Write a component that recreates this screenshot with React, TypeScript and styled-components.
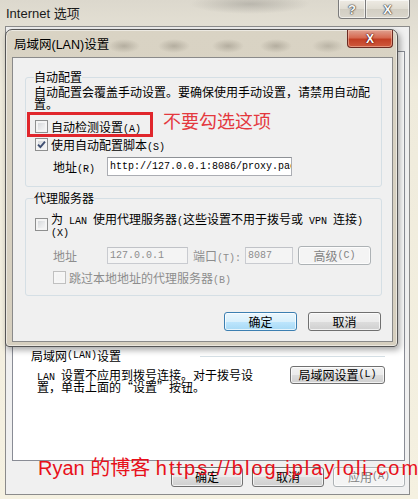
import React from 'react'
import styled, { createGlobalStyle } from 'styled-components'

const GlobalStyle = createGlobalStyle`
  html, body { margin: 0; padding: 0; }
  body { background: #f4f0e0; }
  * { box-sizing: border-box; }
`

const cjk = `"Noto Sans CJK SC", "Liberation Sans", sans-serif`
const ui = `"Liberation Sans", "Noto Sans CJK SC", sans-serif`

const Desktop = styled.div`
  position: relative;
  width: 418px;
  height: 499px;
  overflow: hidden;
  display: flex;
  flex-direction: column;
  font-family: ${cjk};
  font-size: 12px;
  color: #000;
  background:
    radial-gradient(ellipse 60px 10px at 250px 4px, rgba(120, 118, 112, 0.35), transparent),
    linear-gradient(180deg, #dcd8cd 0, #e3dfd3 26px, #efebdc 90px, #f5f1e1 100%);
`

const OuterTitleBar = styled.div`
  height: 26px;
  flex: none;
  display: flex;
  justify-content: space-between;
  align-items: flex-start;
  padding: 0 8px 0 6px;
`
const WindowTitle = styled.div`
  margin-top: 7px;
  font-family: ${ui};
  font-size: 13px;
  line-height: 14px;
  color: #1a1a1a;
`
const CaptionGroup = styled.div`
  display: flex;
`
const CaptionButton = styled.div<{ $w: number; $side: 'left' | 'right' }>`
  width: ${p => p.$w}px;
  height: 19px;
  display: flex;
  align-items: center;
  justify-content: center;
  border: 1px solid #7b7b7b;
  border-top: none;
  border-left-width: ${p => (p.$side === 'right' ? 0 : 1)}px;
  border-radius: ${p => (p.$side === 'left' ? '0 0 0 4px' : '0 0 4px 0')};
  background: linear-gradient(180deg, #eeebe4 0%, #e0dcd2 50%, #d2cec3 51%, #dad6cc 100%);
  box-shadow: inset 0 0 0 1px rgba(255, 255, 255, 0.6);
  font: bold 13px "Liberation Sans", sans-serif;
  color: #fafafa;
  text-shadow: 0 0 1px #333, 0 0 1px #333, 0 0 2px #555;
`

const OuterBody = styled.div`
  flex: 1;
  margin: 0 8px 4px 5px;
  border: 1px solid #8b8b8b;
  background: #f0f0f0;
  display: flex;
  flex-direction: column;
  gap: 6px;
  padding: 24px 4px 7px 6px;
`
const TabPanel = styled.div`
  flex: 1;
  background: #fff;
  border: 1px solid #898c95;
  display: flex;
  flex-direction: column;
  justify-content: flex-end;
  padding: 0 19px 67px 18px;
`
const LanHeader = styled.div`
  display: flex;
  align-items: center;
  height: 12px;
  line-height: 12px;
`
const LanLine = styled.div`
  margin-left: auto;
  width: 185px;
  border-top: 1px solid #d5dfe5;
`
const LanBody = styled.div`
  margin-top: 4px;
  height: 27px;
  display: flex;
  justify-content: space-between;
  align-items: flex-start;
`
const LanText = styled.div`
  padding: 3px 0 0 6px;
  line-height: 12px;
`
const ButtonRow = styled.div<{ $gap: number }>`
  display: flex;
  justify-content: flex-end;
  gap: ${p => p.$gap}px;
`

const Button = styled.div<{ $w: number; $h: number; $kind?: 'default' | 'disabled' }>`
  width: ${p => p.$w}px;
  height: ${p => p.$h}px;
  flex: none;
  display: flex;
  align-items: center;
  justify-content: center;
  border-radius: 3px;
  line-height: 12px;
  border: 1px solid
    ${p => (p.$kind === 'default' ? '#3c7fb1' : p.$kind === 'disabled' ? '#adb2b5' : '#707070')};
  color: ${p => (p.$kind === 'disabled' ? '#838383' : '#000')};
  background: ${p =>
    p.$kind === 'default'
      ? 'linear-gradient(180deg, #eaf6fd 0%, #d9f0fc 50%, #bee6fd 51%, #a7d9f5 100%)'
      : p.$kind === 'disabled'
        ? '#f4f4f4'
        : 'linear-gradient(180deg, #f2f2f2 0%, #ebebeb 50%, #dddddd 51%, #cfcfcf 100%)'};
  box-shadow: inset 0 0 0 1px rgba(255, 255, 255, 0.7);
`

/* LAN dialog */
const Dialog = styled.div`
  position: absolute;
  left: 5px;
  top: 29px;
  width: 393px;
  height: 318px;
  display: flex;
  flex-direction: column;
  border: 1px solid #555;
  border-radius: 7px 7px 4px 4px;
  background:
    radial-gradient(ellipse 16px 7px at 118px 16px, rgba(95, 88, 75, 0.3), transparent),
    radial-gradient(ellipse 16px 7px at 168px 16px, rgba(95, 88, 75, 0.3), transparent),
    radial-gradient(ellipse 16px 7px at 222px 16px, rgba(95, 88, 75, 0.3), transparent),
    radial-gradient(ellipse 16px 7px at 270px 16px, rgba(95, 88, 75, 0.3), transparent),
    radial-gradient(ellipse 16px 7px at 322px 16px, rgba(95, 88, 75, 0.25), transparent),
    linear-gradient(180deg, #d9d3c4 0%, #d6cfbf 100%);
  box-shadow: inset 0 0 0 1px rgba(255, 255, 255, 0.5), 2px 3px 6px rgba(0, 0, 0, 0.35);
`
const DialogTitleBar = styled.div`
  height: 27px;
  flex: none;
  display: flex;
  justify-content: space-between;
  align-items: flex-start;
  padding: 0 4px 0 8px;
`
const DialogTitle = styled.div`
  margin-top: 8px;
  font-family: ${ui};
  font-size: 12.5px;
  line-height: 14px;
`
const CloseButton = styled.div`
  width: 46px;
  height: 18px;
  display: flex;
  align-items: center;
  justify-content: center;
  border: 1px solid #6b2a22;
  border-top: none;
  border-radius: 0 0 4px 4px;
  background: linear-gradient(180deg, #e0a090 0%, #d66a52 45%, #c23f25 55%, #cf5a3e 100%);
  box-shadow: inset 0 0 0 1px rgba(255, 220, 200, 0.45);
  font: bold 12px "Liberation Sans", sans-serif;
  color: #fff;
  text-shadow: 0 0 1px #400, 0 0 2px #500;
`
const DialogContent = styled.div`
  flex: 1;
  margin: 0 4px 4px 6px;
  border: 1px solid #8a8a8a;
  background: #f0f0f0;
  display: flex;
  flex-direction: column;
  padding: 13px 10px 10px 12px;
`

const Group = styled.fieldset<{ $pb: number; $mt?: number }>`
  margin: ${p => p.$mt ?? 0}px 0 0 0;
  padding: 0 0 ${p => p.$pb}px 8px;
  border: 1px solid #d5dfe5;
  border-radius: 3px;
  min-width: 0;
`
const GroupTitle = styled.legend`
  padding: 0;
  height: 12px;
  font-size: 12px;
  line-height: 12px;
`
const Desc = styled.div`
  margin-top: 3px;
  height: 24px;
  line-height: 12px;
`
const Row = styled.div<{ $mt: number; $h: number; $indent?: number; $align?: string }>`
  margin-top: ${p => p.$mt}px;
  height: ${p => p.$h}px;
  padding-left: ${p => p.$indent ?? 0}px;
  display: flex;
  align-items: ${p => p.$align ?? 'center'};
  line-height: 12px;
`
const Label = styled.span<{ $disabled?: boolean; $gap?: number }>`
  margin-left: ${p => p.$gap ?? 0}px;
  color: ${p => (p.$disabled ? '#8d8d8d' : '#000')};
  white-space: nowrap;
`
const Latin = styled.span`
  font-family: "Liberation Mono", monospace;
  font-size: 10px;
  line-height: 0;
`
const CheckBox = styled.span<{ $disabled?: boolean; $mt?: number }>`
  width: 13px;
  height: 13px;
  flex: none;
  margin: ${p => p.$mt ?? 0}px 0 0 1px;
  display: flex;
  align-items: center;
  justify-content: center;
  border: 1px solid ${p => (p.$disabled ? '#c0c0c0' : '#8e8f8f')};
  background: ${p =>
    p.$disabled ? '#f4f4f4' : 'linear-gradient(135deg, #cdd0d4 0%, #e9eaeb 55%, #fbfbfb 100%)'};
  box-shadow: inset 0 0 0 2px ${p => (p.$disabled ? '#f6f6f6' : '#f4f4f4')};
`
const Field = styled.div<{ $w: number; $h: number; $disabled?: boolean; $gap?: number }>`
  width: ${p => p.$w}px;
  height: ${p => p.$h}px;
  flex: none;
  margin-left: ${p => p.$gap ?? 0}px;
  display: flex;
  align-items: center;
  padding-left: 2px;
  overflow: hidden;
  white-space: nowrap;
  line-height: 12px;
  border: 1px solid ${p => (p.$disabled ? '#c9cbd0' : '#abadb3')};
  border-top-color: ${p => (p.$disabled ? '#c0c2c7' : '#8e9196')};
  background: ${p => (p.$disabled ? '#f4f4f4' : '#fff')};
  color: ${p => (p.$disabled ? '#8d8d8d' : '#000')};
  font-family: "Liberation Mono", monospace;
  font-size: 10px;
`
const Highlight = styled.div`
  position: relative;
  display: flex;
  align-items: center;
  &::after {
    content: '';
    position: absolute;
    inset: -8px -12px -4px -7px;
    border: 3px solid #e0262c;
    pointer-events: none;
  }
`
const Note = styled.span`
  position: absolute;
  left: calc(100% + 22px);
  top: -9px;
  font-size: 18px;
  line-height: 18px;
  color: #e4383e;
  white-space: nowrap;
`
const Watermark = styled.div`
  position: absolute;
  left: 38px;
  top: 458px;
  font-family: ${ui};
  font-size: 20px;
  line-height: 20px;
  color: #e8101a;
  white-space: nowrap;
`
const Url = styled.span`
  letter-spacing: 2px;
`

const Txt = ({ children }: { children: string }) => (
  <>
    {children
      .split(/([\x20-\x7e]+)/)
      .map((s, i) => (i % 2 ? <Latin key={i}>{s}</Latin> : s))}
  </>
)

const Check = ({ checked, disabled, mt }: { checked?: boolean; disabled?: boolean; mt?: number }) => (
  <CheckBox $disabled={disabled} $mt={mt}>
    {checked && (
      <svg width="9" height="9" viewBox="0 0 9 9">
        <path d="M1 4.6 L3.4 7 L8 1.6" fill="none" stroke="#3f4f72" strokeWidth="1.9" />
      </svg>
    )}
  </CheckBox>
)

export default function App() {
  return (
    <Desktop>
      <GlobalStyle />
      <OuterTitleBar>
        <WindowTitle>Internet 选项</WindowTitle>
        <CaptionGroup>
          <CaptionButton $w={28} $side="left">?</CaptionButton>
          <CaptionButton $w={44} $side="right">X</CaptionButton>
        </CaptionGroup>
      </OuterTitleBar>

      <OuterBody>
        <TabPanel>
          <LanHeader>
            <Txt>局域网(LAN)设置</Txt>
            <LanLine />
          </LanHeader>
          <LanBody>
            <LanText>
              <Txt>LAN 设置不应用到拨号连接。对于拨号设</Txt>
              <br />
              置，单击上面的“设置”按钮。
            </LanText>
            <Button $w={95} $h={18}>
              <Txt>局域网设置(L)</Txt>
            </Button>
          </LanBody>
        </TabPanel>
        <ButtonRow $gap={9}>
          <Button $w={72} $h={20}>确定</Button>
          <Button $w={72} $h={20}>取消</Button>
          <Button $w={72} $h={20} $kind="disabled">
            <Txt>应用(A)</Txt>
          </Button>
        </ButtonRow>
      </OuterBody>

      <Dialog>
        <DialogTitleBar>
          <DialogTitle>局域网(LAN)设置</DialogTitle>
          <CloseButton>X</CloseButton>
        </DialogTitleBar>
        <DialogContent>
          <Group $pb={10}>
            <GroupTitle>自动配置</GroupTitle>
            <Desc>
              自动配置会覆盖手动设置。要确保使用手动设置，请禁用自动配
              <br />
              置。
            </Desc>
            <Row $mt={10} $h={13}>
              <Highlight>
                <Check />
                <Label $gap={3}>
                  <Txt>自动检测设置(A)</Txt>
                </Label>
                <Note>不要勾选这项</Note>
              </Highlight>
            </Row>
            <Row $mt={5} $h={13}>
              <Check checked />
              <Label $gap={3}>
                <Txt>使用自动配置脚本(S)</Txt>
              </Label>
            </Row>
            <Row $mt={6} $h={19} $indent={19}>
              <Label>
                <Txt>地址(R)</Txt>
              </Label>
              <Field $w={185} $h={19} $gap={12}>
                http://127.0.0.1:8086/proxy.pac
              </Field>
            </Row>
          </Group>

          <Group $pb={11} $mt={5}>
            <GroupTitle>代理服务器</GroupTitle>
            <Row $mt={9} $h={24} $align="flex-start">
              <Check mt={5} />
              <Label $gap={3}>
                <Txt>为 LAN 使用代理服务器(这些设置不用于拨号或 VPN 连接)</Txt>
                <br />
                <Txt>(X)</Txt>
              </Label>
            </Row>
            <Row $mt={9} $h={19} $indent={19}>
              <Label $disabled>地址</Label>
              <Field $w={81} $h={17} $disabled $gap={30}>
                127.0.0.1
              </Field>
              <Label $disabled $gap={5}>
                <Txt>端口(T):</Txt>
              </Label>
              <Field $w={48} $h={17} $disabled $gap={4}>
                8087
              </Field>
              <Button $w={73} $h={19} $kind="disabled" style={{ marginLeft: 5 }}>
                <Txt>高级(C)</Txt>
              </Button>
            </Row>
            <Row $mt={6} $h={13} $indent={18}>
              <Check disabled />
              <Label $disabled $gap={3}>
                <Txt>跳过本地地址的代理服务器(B)</Txt>
              </Label>
            </Row>
          </Group>

          <ButtonRow $gap={11} style={{ marginTop: 16, paddingRight: 1 }}>
            <Button $w={73} $h={19} $kind="default">确定</Button>
            <Button $w={73} $h={19}>取消</Button>
          </ButtonRow>
        </DialogContent>
      </Dialog>

      <Watermark>
        Ryan 的博客 <Url>https://blog.iplayloli.com</Url>
      </Watermark>
    </Desktop>
  )
}
